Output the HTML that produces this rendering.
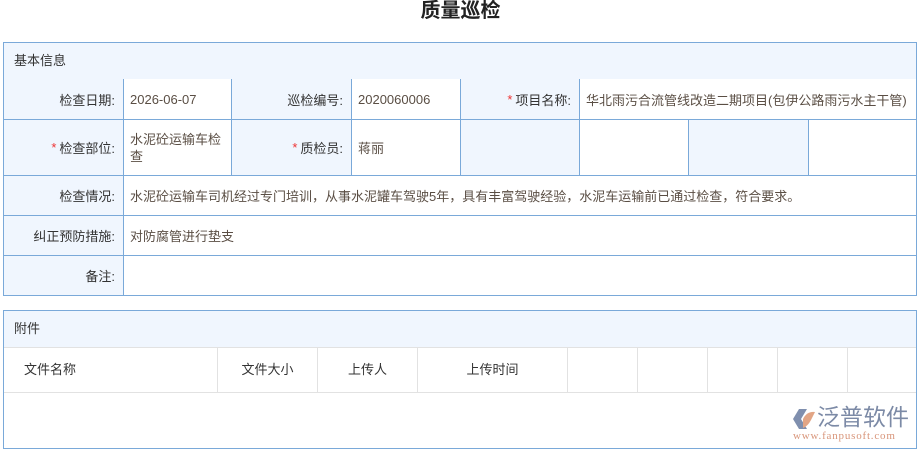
<!DOCTYPE html>
<html><head><meta charset="utf-8"><style>
*{margin:0;padding:0;box-sizing:border-box}
body{width:921px;height:453px;background:#fff;font-family:"Liberation Sans","Noto Sans CJK SC",sans-serif;font-size:13px;color:#333;position:relative;overflow:hidden}
.title{position:absolute;top:-1px;left:0;width:921px;text-align:center;font-size:20px;font-weight:bold;line-height:24px;color:#222}
.box{position:absolute;left:3px;width:914px;border:1px solid #7aa9d9}
.hd{background:#f0f6fe;height:37px;line-height:36px;padding-left:10px;border-bottom:1px solid #7aa9d9}
.c{position:absolute;border-right:1px solid #7aa9d9;border-bottom:1px solid #7aa9d9;padding:0 8px;display:flex;align-items:center}
.l{background:#f0f6fe;justify-content:flex-end}
.v{background:#fff;color:#5a4e44;padding-left:6px}
.s{color:#e33;margin-right:3px}
.g{position:absolute;border-right:1px solid #e2e2e2;border-bottom:1px solid #e2e2e2;display:flex;align-items:center;padding-bottom:3px}
</style></head><body>
<div class="title">质量巡检</div>
<div class="box" style="top:42px;height:254px">
<div class="hd">基本信息</div>
</div>
<div class="c l" style="left:4px;top:79px;width:120px;height:41px">检查日期:</div>
<div class="c v" style="left:124px;top:79px;width:108px;height:41px">2026-06-07</div>
<div class="c l" style="left:232px;top:79px;width:120px;height:41px">巡检编号:</div>
<div class="c v" style="left:352px;top:79px;width:109px;height:41px">2020060006</div>
<div class="c l" style="left:461px;top:79px;width:119px;height:41px"><span class="s">*</span>项目名称:</div>
<div class="c v" style="left:580px;top:79px;width:336px;height:41px;border-right:none;white-space:nowrap;padding-left:6px">华北雨污合流管线改造二期项目(包伊公路雨污水主干管)</div>
<div class="c l" style="left:4px;top:120px;width:120px;height:56px"><span class="s">*</span>检查部位:</div>
<div class="c v" style="left:124px;top:120px;width:108px;height:56px;line-height:17px">水泥砼运输车检查</div>
<div class="c l" style="left:232px;top:120px;width:120px;height:56px"><span class="s">*</span>质检员:</div>
<div class="c v" style="left:352px;top:120px;width:109px;height:56px">蒋丽</div>
<div class="c l" style="left:461px;top:120px;width:119px;height:56px"></div>
<div class="c v" style="left:580px;top:120px;width:109px;height:56px"></div>
<div class="c l" style="left:689px;top:120px;width:120px;height:56px"></div>
<div class="c v" style="left:809px;top:120px;width:107px;height:56px;border-right:none"></div>
<div class="c l" style="left:4px;top:176px;width:120px;height:40px">检查情况:</div>
<div class="c v" style="left:124px;top:176px;width:792px;height:40px;border-right:none">水泥砼运输车司机经过专门培训，从事水泥罐车驾驶5年，具有丰富驾驶经验，水泥车运输前已通过检查，符合要求。</div>
<div class="c l" style="left:4px;top:216px;width:120px;height:40px">纠正预防措施:</div>
<div class="c v" style="left:124px;top:216px;width:792px;height:40px;border-right:none">对防腐管进行垫支</div>
<div class="c l" style="left:4px;top:256px;width:120px;height:39px;border-bottom:none">备注:</div>
<div class="c v" style="left:124px;top:256px;width:792px;height:39px;border-right:none;border-bottom:none"></div>

<div class="box" style="top:310px;height:139px">
<div class="hd" style="border-bottom:1px solid #e2e2e2">附件</div>
</div>
<div class="g" style="left:4px;top:348px;width:214px;height:45px;padding-left:20px">文件名称</div>
<div class="g" style="left:218px;top:348px;width:100px;height:45px;justify-content:center">文件大小</div>
<div class="g" style="left:318px;top:348px;width:100px;height:45px;justify-content:center">上传人</div>
<div class="g" style="left:418px;top:348px;width:150px;height:45px;justify-content:center">上传时间</div>
<div class="g" style="left:568px;top:348px;width:70px;height:45px"></div>
<div class="g" style="left:638px;top:348px;width:70px;height:45px"></div>
<div class="g" style="left:708px;top:348px;width:70px;height:45px"></div>
<div class="g" style="left:778px;top:348px;width:70px;height:45px"></div>
<div class="g" style="left:848px;top:348px;width:68px;height:45px;border-right:none"></div>

<svg style="position:absolute;left:791px;top:406px" width="26" height="26" viewBox="0 0 26 26">
<polygon points="2,13 8,3 16,3 10,13 16,23 8,23" fill="#7f8fae"/>
<path d="M12,13 Q16,5 24,6 L20,14 Q17,20 12,22 Z" fill="#e2a585"/>
</svg>
<div style="position:absolute;left:817px;top:403px;font-size:23px;color:#7c8aa6;line-height:28px;letter-spacing:0px">泛普软件</div>
<div style="position:absolute;left:793px;top:430px;font-size:11px;color:#d8957a;font-family:'Liberation Serif',serif;letter-spacing:0.8px">www.fanpusoft.com</div>
</body></html>
